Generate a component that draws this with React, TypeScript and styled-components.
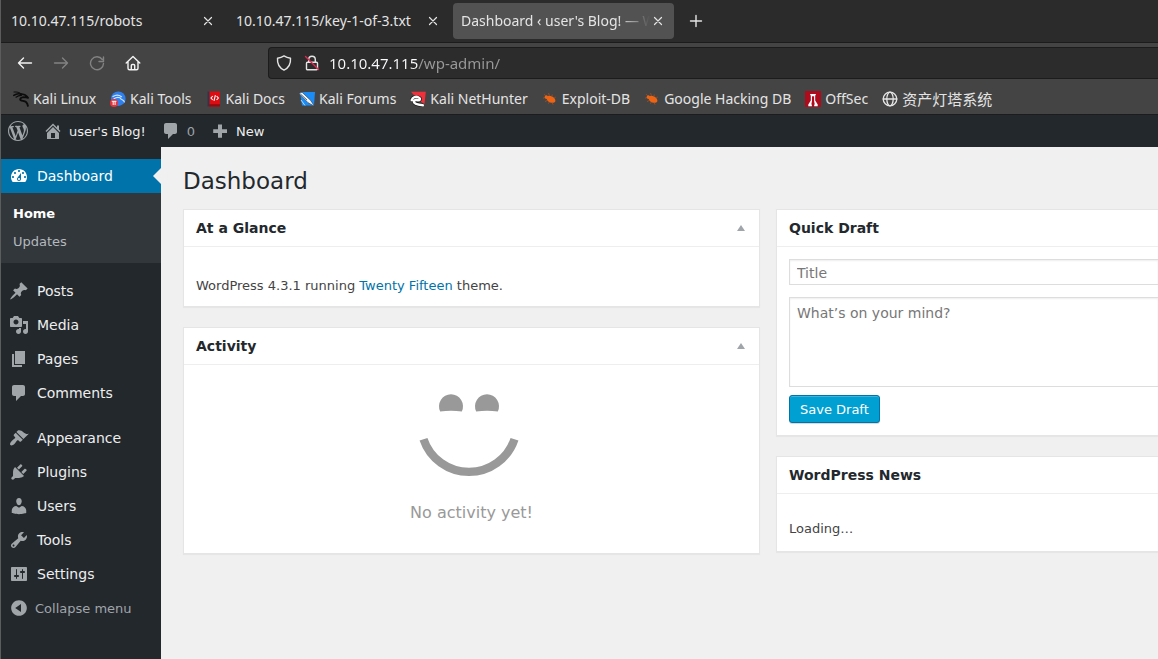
import React from "react";
import styled, { createGlobalStyle } from "styled-components";

const chromeFont = `"Noto Sans", "Noto Sans CJK SC", sans-serif`;
const pageFont = `"DejaVu Sans", sans-serif`;

const GlobalStyle = createGlobalStyle`
  *, *::before, *::after { box-sizing: border-box; }
  body { margin: 0; background: #f0f0f0; overflow-x: hidden; }
  button, input, textarea { font-family: inherit; margin: 0; }
  h1, h2, p, ul { margin: 0; padding: 0; }
  ul { list-style: none; }
  a { text-decoration: none; color: inherit; }
  svg { display: block; flex: none; }
`;

const Window = styled.div`
  display: flex;
  flex-direction: column;
  min-height: 100vh;
  border-left: 1px solid #5c5c5c;
`;

/* Browser chrome */

const Chrome = styled.header`
  background: #444444;
  border-bottom: 1px solid #1c1c1c;
  color: #e4e4e4;
  font-family: ${chromeFont};
  font-size: 14px;
  line-height: 20px;
`;

const TabStrip = styled.div`
  display: flex;
  gap: 4px;
  height: 43px;
  padding: 3px 2px;
  background: #2b2b2b;
  border-bottom: 1px solid #1c1c1c;
`;

const Tab = styled.div<{ $active?: boolean }>`
  display: flex;
  align-items: center;
  width: 221px;
  height: 36px;
  padding: 0 8px;
  border-radius: 4px;
  background: ${(p) => (p.$active ? "#525252" : "transparent")};
`;

const TabTitle = styled.span<{ $faded?: boolean }>`
  flex: 1;
  min-width: 0;
  white-space: nowrap;
  ${(p) =>
    p.$faded &&
    "mask-image: linear-gradient(to left, transparent, black 32px);"}
`;

const BareButton = styled.button`
  display: flex;
  align-items: center;
  justify-content: center;
  padding: 0;
  border: 0;
  background: none;
  color: inherit;
  cursor: pointer;
`;

const TabClose = styled(BareButton)`
  width: 16px;
  height: 16px;
`;

const NewTab = styled(BareButton)`
  width: 36px;
  height: 36px;
`;

const Toolbar = styled.div`
  display: flex;
  align-items: center;
  height: 40px;
  padding-left: 6px;
`;

const ToolButton = styled(BareButton)<{ $dim?: boolean }>`
  width: 36px;
  height: 32px;
  color: ${(p) => (p.$dim ? "#828282" : "#f2f2f2")};
`;

const AddressBar = styled.div`
  display: flex;
  align-items: center;
  flex: 1;
  height: 32px;
  margin-left: 117px;
  padding-left: 7px;
  gap: 9px;
  background: #2c2c2c;
  border: 1px solid #1c1c1c;
  border-right: 0;
  border-radius: 4px 0 0 4px;
`;

const SiteIcons = styled.div`
  display: flex;
  gap: 12px;
  color: #e4e4e4;
`;

const Address = styled.input`
  flex: 1;
  min-width: 0;
  padding: 0;
  border: 0;
  outline: 0;
  font-size: 15px;
  line-height: 24px;
  color: transparent;
  background: linear-gradient(to right, #fbfbfe 89px, #9a9a9a 89px);
  background-clip: text;
  -webkit-background-clip: text;
`;

const Bookmarks = styled.nav`
  display: flex;
  align-items: center;
  gap: 14px;
  height: 31px;
  padding: 0 0 0 12px;
`;

const Bookmark = styled.a<{ $large?: boolean }>`
  display: flex;
  align-items: center;
  gap: 4px;
  font-size: ${(p) => (p.$large ? 15 : 14)}px;
  white-space: nowrap;
`;

/* Admin bar */

const AdminBar = styled.nav`
  display: flex;
  align-items: center;
  height: 32px;
  padding-left: 7px;
  gap: 15px;
  background: #23282d;
  color: #eeeeee;
  font-family: ${pageFont};
  font-size: 13px;
  line-height: 20px;
`;

const BarItem = styled.a`
  display: flex;
  align-items: flex-end;
  gap: 6px;
  height: 22px;
  white-space: nowrap;
  svg { color: #a0a5aa; align-self: center; }
`;

const Muted = styled.span`
  color: #9ca1a6;
`;

/* Sidebar */

const Admin = styled.div`
  display: flex;
  flex: 1;
  font-family: ${pageFont};
`;

const Sidebar = styled.nav`
  flex: none;
  width: 160px;
  padding-top: 12px;
  background: #23282d;
  font-size: 14px;
  line-height: 18px;
`;

const MenuGroup = styled.ul`
  margin-bottom: 11px;
  &:last-child { margin-bottom: 0; }
`;

const MenuLink = styled.a<{ $current?: boolean }>`
  position: relative;
  display: flex;
  align-items: center;
  gap: 8px;
  height: 34px;
  padding-left: 8px;
  color: ${(p) => (p.$current ? "#ffffff" : "#eeeeee")};
  background: ${(p) => (p.$current ? "#0073aa" : "transparent")};
  svg { color: ${(p) => (p.$current ? "#ffffff" : "#a0a5aa")}; }
  &::after {
    content: "";
    display: ${(p) => (p.$current ? "block" : "none")};
    position: absolute;
    right: 0;
    top: 9px;
    border: 8px solid transparent;
    border-left-width: 0;
    border-right-color: #f0f0f0;
  }
`;

const Submenu = styled.ul`
  padding: 7px 0;
  background: #32373c;
`;

const SubLink = styled.a<{ $current?: boolean }>`
  display: block;
  padding: 5px 12px;
  font-size: 13px;
  color: ${(p) => (p.$current ? "#ffffff" : "#b4b9be")};
  font-weight: ${(p) => (p.$current ? 700 : 400)};
`;

const Collapse = styled(BareButton)`
  gap: 6px;
  height: 34px;
  padding-left: 8px;
  font-size: 13px;
  color: #a0a5aa;
`;

/* Dashboard */

const Content = styled.main`
  flex: 1;
  min-width: 0;
  padding: 20px 0 20px 22px;
  color: #444444;
  font-size: 13px;
  line-height: 20px;
`;

const PageTitle = styled.h1`
  font-size: 23px;
  font-weight: 400;
  line-height: 29px;
  color: #23282d;
`;

const Columns = styled.div`
  display: grid;
  grid-template-columns: minmax(0, 577fr) minmax(0, 382fr);
  gap: 16px;
  margin-top: 13px;
`;

const Column = styled.div`
  display: flex;
  flex-direction: column;
  gap: 20px;
`;

const Box = styled.section<{ $bleed?: boolean }>`
  background: #ffffff;
  border: 1px solid #e5e5e5;
  border-right-width: ${(p) => (p.$bleed ? 0 : 1)}px;
  box-shadow: 0 1px 1px rgba(0, 0, 0, 0.04);
`;

const BoxHeader = styled.header`
  display: flex;
  align-items: center;
  justify-content: space-between;
  height: 37px;
  padding: 0 12px 1px;
  border-bottom: 1px solid #eeeeee;
`;

const BoxTitle = styled.h2`
  font-size: 14px;
  font-weight: 700;
  line-height: 20px;
  color: #23282d;
`;

const Toggle = styled(BareButton)`
  width: 12px;
  height: 20px;
  color: #a0a5aa;
`;

const Paragraph = styled.p`
  padding: 29px 12px 10px;
`;

const Loading = styled.p`
  padding: 25px 12px 12px;
`;

const TextLink = styled.a`
  color: #0073aa;
`;

const NoActivity = styled.div`
  display: flex;
  flex-direction: column;
  align-items: center;
  gap: 20px;
  padding: 28px 0 30px;
  color: #999999;
  font-size: 16px;
  line-height: 20px;
`;

const DraftForm = styled.form`
  display: flex;
  flex-direction: column;
  align-items: flex-start;
  padding: 12px 0 12px 12px;
`;

const fieldStyle = `
  display: block;
  width: 100%;
  border: 1px solid #dddddd;
  border-right: 0;
  border-radius: 0;
  outline: 0;
  background: #ffffff;
  box-shadow: inset 0 1px 2px rgba(0, 0, 0, 0.07);
  font-size: 14px;
  color: #32373c;
  resize: none;
  &::placeholder { color: #777777; opacity: 1; }
`;

const TitleField = styled.input`
  ${fieldStyle}
  height: 26px;
  padding: 1px 7px 0;
`;

const DraftField = styled.textarea`
  ${fieldStyle}
  height: 90px;
  margin: 12px 0 8px;
  padding: 5px 7px;
  line-height: 20px;
`;

const SaveButton = styled.button`
  height: 28px;
  padding: 2px 10px 0;
  border: 1px solid #0073aa;
  border-radius: 3px;
  background: #00a0d2;
  box-shadow: inset 0 1px 0 rgba(120, 200, 230, 0.5), 0 1px 0 rgba(0, 0, 0, 0.15);
  color: #ffffff;
  font-size: 13px;
  line-height: 24px;
  cursor: pointer;
`;

/* Icons */

const dash = {
  wordpress:
    "M20 10c0-5.51-4.49-10-10-10C4.48 0 0 4.49 0 10c0 5.52 4.48 10 10 10 5.51 0 10-4.48 10-10zM7.78 15.37L4.37 6.22c.55-.02 1.17-.08 1.17-.08.5-.06.44-1.13-.06-1.11 0 0-1.45.11-2.37.11-.18 0-.37 0-.58-.01C4.12 2.69 6.87 1.11 10 1.11c2.33 0 4.45.87 6.05 2.34-.68-.11-1.65.39-1.65 1.58 0 .74.45 1.36.9 2.1.35.61.55 1.36.55 2.46 0 1.49-1.4 5-1.4 5l-3.03-8.37c.54-.02.82-.17.82-.17.5-.05.44-1.25-.06-1.22 0 0-1.44.12-2.38.12-.87 0-2.33-.12-2.33-.12-.5-.03-.56 1.2-.06 1.22l.92.08 1.26 3.41zM17.41 10c.24-.64.74-1.87.43-4.25.7 1.29 1.05 2.71 1.05 4.25 0 3.29-1.73 6.24-4.4 7.78.97-2.59 1.94-5.2 2.92-7.78zM6.1 18.09C3.12 16.65 1.11 13.53 1.11 10c0-1.3.23-2.48.72-3.59C3.25 10.3 4.67 14.2 6.1 18.09zm4.03-6.63l2.58 6.98c-.86.29-1.76.45-2.71.45-.79 0-1.57-.11-2.29-.33.81-2.38 1.62-4.74 2.42-7.1z",
  home: "M16 8.5l1.53 1.53-1.06 1.06L10 4.6l-6.47 6.49-1.06-1.06L10 2.5l4 4v-2h2v4zm-6-2.46l6 5.99V18H4v-5.97zM12 17v-5H8v5h4z",
  plus: "M17 8.2v3.800h-5v4.800H8v-4.800H3.200V8.200H8V3.400h4v4.800z",
  dashboard:
    "M3.76 16h12.48c1.1-1.37 1.76-3.11 1.76-5 0-4.42-3.58-8-8-8s-8 3.58-8 8c0 1.89.66 3.63 1.76 5zM10 4c.55 0 1 .45 1 1s-.45 1-1 1-1-.45-1-1 .45-1 1-1zM6 6c.55 0 1 .45 1 1s-.45 1-1 1-1-.45-1-1 .45-1 1-1zm8 0c.55 0 1 .45 1 1s-.45 1-1 1-1-.45-1-1 .45-1 1-1zm-5.37 5.55L12 7v6c0 1.1-.9 2-2 2s-2-.9-2-2c0-.57.24-1.08.63-1.45zM4 10c.55 0 1 .45 1 1s-.45 1-1 1-1-.45-1-1 .45-1 1-1zm12 0c.55 0 1 .45 1 1s-.45 1-1 1-1-.45-1-1 .45-1 1-1zm-5 3c0-.55-.45-1-1-1s-1 .45-1 1 .45 1 1 1 1-.45 1-1z",
  posts:
    "M10.44 3.02l1.82-1.82 6.36 6.35-1.83 1.82c-1.05-.68-2.48-.57-3.41.36l-.75.75c-.92.93-1.04 2.35-.35 3.41l-1.83 1.82-2.41-2.41-2.8 2.79c-.42.42-3.38 2.71-3.8 2.29s1.86-3.39 2.28-3.81l2.79-2.79L4.1 9.36l1.83-1.82c1.05.69 2.48.57 3.4-.36l.75-.75c.93-.92 1.05-2.35.36-3.41z",
  media:
    "M13 11V4c0-.55-.45-1-1-1h-1.67L9 1H5L3.67 3H2c-.55 0-1 .45-1 1v7c0 .55.45 1 1 1h10c.55 0 1-.45 1-1zM7 4.5c1.38 0 2.5 1.12 2.5 2.5S8.38 9.5 7 9.5 4.5 8.38 4.5 7 5.62 4.5 7 4.5zM14 6h5v10.5c0 1.38-1.12 2.5-2.5 2.5S14 17.88 14 16.5s1.12-2.5 2.5-2.5c.17 0 .34.02.5.05V9h-3V6zm-4 8.05V13h2v3.5c0 1.38-1.12 2.5-2.5 2.5S7 17.88 7 16.5 8.12 14 9.5 14c.17 0 .34.02.5.05z",
  pages: "M6 15V2h10v13H6zm-1 1h8v2H3V5h2v11z",
  comments:
    "M5 2h9c1.1 0 2 .9 2 2v7c0 1.1-.9 2-2 2h-2l-5 5v-5H5c-1.1 0-2-.9-2-2V4c0-1.1.9-2 2-2z",
  appearance:
    "M14.48 11.06L7.41 3.99l1.5-1.5c.5-.56 2.3-.47 3.51.32 1.21.8 1.43 1.28 2.91 2.1 1.18.64 2.45 1.26 4.45.85zm-.71.71L6.7 4.7 4.93 6.47c-.39.39-.39 1.02 0 1.41l1.06 1.06c.39.39.39 1.03 0 1.42-.6.6-1.43 1.11-2.21 1.69-.35.26-.7.53-1.01.84C1.43 14.23.4 16.08 1.4 17.07c.99 1 2.84-.03 4.18-1.36.31-.31.58-.66.85-1.02.57-.78 1.08-1.61 1.69-2.21.39-.39 1.02-.39 1.41 0l1.06 1.06c.39.39 1.02.39 1.41 0z",
  plugins:
    "M13.11 4.36L9.87 7.6 8 5.73l3.24-3.24c.35-.34 1.05-.2 1.56.32.52.51.66 1.21.31 1.55zm-8 1.77l.91-1.12 9.01 9.01-1.19.84c-.71.71-2.63 1.16-3.82 1.16H6.14L4.9 17.26c-.59.59-1.54.59-2.12 0-.59-.58-.59-1.53 0-2.12l1.24-1.24v-3.88c0-1.13.4-3.19 1.09-3.89zm7.26 3.97l3.24-3.24c.34-.35 1.04-.21 1.55.31.52.51.66 1.21.31 1.55l-3.24 3.25z",
  users:
    "M10 9.25c-2.27 0-2.73-3.44-2.73-3.44C7 4.02 7.82 2 9.97 2c2.16 0 2.98 2.02 2.71 3.81 0 0-.41 3.44-2.68 3.44zm0 2.57L12.72 10c2.39 0 4.52 2.33 4.52 4.53v2.49s-3.65 1.13-7.24 1.13c-3.65 0-7.24-1.13-7.24-1.13v-2.49c0-2.25 1.94-4.48 4.47-4.48z",
  tools:
    "M16.68 9.77c-1.34 1.34-3.3 1.67-4.95.99l-5.41 6.52c-.99.99-2.59.99-3.58 0s-.99-2.59 0-3.57l6.52-5.42c-.68-1.65-.35-3.61.99-4.95 1.28-1.28 3.12-1.62 4.72-1.06l-2.89 2.89 2.82 2.82 2.86-2.87c.53 1.58.18 3.39-1.08 4.65zM3.81 16.21c.4.39 1.04.39 1.43 0 .4-.4.4-1.04 0-1.43-.39-.4-1.03-.4-1.43 0-.39.39-.39 1.03 0 1.43z",
  settings:
    "M18 16V4c0-.55-.45-1-1-1H3c-.55 0-1 .45-1 1v12c0 .55.45 1 1 1h14c.55 0 1-.45 1-1zM8 11h1c.55 0 1 .45 1 1s-.45 1-1 1H8v1.5c0 .28-.22.5-.5.5s-.5-.22-.5-.5V13H6c-.55 0-1-.45-1-1s.45-1 1-1h1V5.5c0-.28.22-.5.5-.5s.5.22.5.5V11zm5-2h-1c-.55 0-1-.45-1-1s.45-1 1-1h1V5.5c0-.28.22-.5.5-.5s.5.22.5.5V7h1c.55 0 1 .45 1 1s-.45 1-1 1h-1v5.5c0 .28-.22.5-.5.5s-.5-.22-.5-.5V9z",
  collapse:
    "M10 2.16c4.33 0 7.84 3.51 7.84 7.84s-3.51 7.84-7.84 7.84S2.16 14.33 2.16 10 5.71 2.16 10 2.16zm2 11.72V6.12L6.18 9.97z",
};

type DashName = keyof typeof dash;

const Dashicon = ({ name }: { name: DashName }) => (
  <svg width="20" height="20" viewBox="0 0 20 20" fill="currentColor" fillRule="evenodd" aria-hidden="true">
    <path d={dash[name]} />
  </svg>
);

const Line = ({ children, size = 16, width = 1.4 }: { children: React.ReactNode; size?: number; width?: number }) => (
  <svg
    width={size}
    height={size}
    viewBox={`0 0 ${size} ${size}`}
    fill="none"
    stroke="currentColor"
    strokeWidth={width}
    strokeLinecap="round"
    strokeLinejoin="round"
    aria-hidden="true"
  >
    {children}
  </svg>
);

const CloseIcon = () => (
  <Line width={1.2}>
    <path d="M4.5 4.5l7 7M11.5 4.5l-7 7" />
  </Line>
);

const Picture = ({ children }: { children: React.ReactNode }) => (
  <svg width="16" height="16" viewBox="0 0 16 16" aria-hidden="true">
    {children}
  </svg>
);

const KaliDragon = () => (
  <Picture>
    <g fill="none" stroke="#0c0c0c" strokeLinecap="round" strokeLinejoin="round">
      <path d="M1 1C4 .8 6.500 1.200 8.400 3" strokeWidth="1" />
      <path d="M.8 4.400C3.600 2.400 6 2.200 8.600 3.400" strokeWidth="1.600" />
      <path d="M3 6.200C5 4.600 6 4.400 8.400 4.400" strokeWidth="1.100" />
      <path d="M8 3.200c2.200-.2 4.400.4 5.800 2.200l1.200 1.400-2-.4C10.500 6 7.400 6 7.200 8.200c0 2.100 4 1.200 5.800 2.700 1.200 1 1.700 2.200 1.900 4" strokeWidth="1.900" />
    </g>
  </Picture>
);

const KaliTools = () => (
  <Picture>
    <circle cx="8.300" cy="7.700" r="7.300" fill="#2f80ed" />
    <path d="M3 5.500c3-2 6-1.700 8.500.2M4 7.700c2.500-1.800 4.500-1.600 6-1 1 2.600 3.600 1.500 4.300 4.200" fill="none" stroke="#cfe4ff" strokeWidth="1.200" strokeLinecap="round" />
    <circle cx="4" cy="11.900" r="4" fill="#e5343d" />
    <path d="M1.800 10.300h4.600M3.200 10.300v3.700M5.100 10.300v3.700" fill="none" stroke="#fff" strokeWidth="1" />
  </Picture>
);

const KaliDocs = () => (
  <Picture>
    <path d="M2 .5h12V15.500H2z" fill="#dc0d12" />
    <path d="M1.600 .5h1.800V15.500H1.600z" fill="#27374d" />
    <path d="M3.200 13.200h10.800v2.300H3.200z" fill="#8e0b10" />
    <path d="M6.800 5L5 7l1.800 2M10.600 5l1.800 2-1.800 2M9.400 4.200L8 9.800" fill="none" stroke="#fff" strokeWidth="1.100" />
  </Picture>
);

const KaliForums = () => (
  <Picture>
    <path d="M1 1h15l-1 13.500H3z" fill="#1b8cf5" />
    <path d="M0 2.500l3-1.300 8.500 8 4 6-6.500-3.500z" fill="#f4f4f4" stroke="#23364a" strokeWidth=".6" />
    <path d="M1.500 3l6.500 6" stroke="#23364a" strokeWidth=".7" />
    <path d="M2 9l4 5.500" stroke="#dbeeff" strokeWidth=".8" />
  </Picture>
);

const NetHunter = () => (
  <Picture>
    <path d="M1 .8h14.800L14.500 13 8 9z" fill="#f0303a" />
    <path d="M1.600 9C2.500 6 6 5.400 8.800 6.600c2.400 1.200 1.200 3.300-1 2.900-2.200-.4-3.800-.2-3.800 1.200 0 1.600 3 3.100 9 3.600" fill="none" stroke="#151515" strokeWidth="3.600" />
    <path d="M1.800 9C2.500 6 6 5.200 8.600 6.500c2.400 1.300 1.200 3.100-.8 2.800-2.200-.4-4-.2-4 1.300 0 1.700 3 3.200 9 3.600" fill="none" stroke="#fff" strokeWidth="2.500" strokeLinecap="round" />
  </Picture>
);

const Bug = () => (
  <Picture>
    <g transform="translate(.4 1) rotate(24 8 8) scale(.88)">
      <path d="M4.200 7.800c.3-2.400 2.500-3.300 5-3.200 3 .1 5.600 1.700 5.600 3.700s-2.600 3.400-5.600 3.400-4.800-1.500-5-3.900z" fill="#ec6414" />
      <circle cx="3.600" cy="8" r="2" fill="#ec6414" />
      <path d="M6 5L4 2.700M9 5l-.5-2.500M12 5.600l1.300-2M6 11l-1.800 2.300M9 11.500l-.3 2.300M12 11l2 1.700M2.300 7L0 6M2.300 9L.7 10.500" fill="none" stroke="#b4531c" strokeWidth=".7" />
    </g>
  </Picture>
);

const OffSec = () => (
  <Picture>
    <path d="M0 0h16v16H0z" fill="#b00b1c" />
    <path d="M5.200 3h5.600v1.200h-.6v5.300l2.500 4v1.700H9.200v-1.700h.6l-.7-3.500V5.300H7v4.700l-.7 3.500h.6v1.700H3.300v-1.700l2.500-4V4.200h-.6z" fill="#ffffff" />
  </Picture>
);

const Globe = () => (
  <Line width={1.3}>
    <circle cx="8" cy="8" r="6.800" />
    <ellipse cx="8" cy="8" rx="3.200" ry="6.800" />
    <path d="M1.200 8h13.600" />
  </Line>
);

const Smiley = () => (
  <svg width="120" height="90" viewBox="0 0 120 90" aria-hidden="true">
    <g fill="#999999">
      <path d="M28.200 18.600A12 12 0 1 1 49.800 18.600Q39 16.800 28.200 18.600z" />
      <path d="M64.200 18.600A12 12 0 1 1 85.800 18.600Q75 16.800 64.200 18.600z" />
    </g>
    <path d="M11.500 46.200A48 48 0 0 0 102.500 46.200" fill="none" stroke="#999999" strokeWidth="8.300" />
  </svg>
);

const ToggleArrow = () => (
  <svg width="8" height="6" viewBox="0 0 8 6" fill="currentColor" aria-hidden="true">
    <path d="M4 0l4 6H0z" />
  </svg>
);

/* Data */

const bookmarks = [
  { label: "Kali Linux", icon: <KaliDragon /> },
  { label: "Kali Tools", icon: <KaliTools /> },
  { label: "Kali Docs", icon: <KaliDocs /> },
  { label: "Kali Forums", icon: <KaliForums /> },
  { label: "Kali NetHunter", icon: <NetHunter /> },
  { label: "Exploit-DB", icon: <Bug /> },
  { label: "Google Hacking DB", icon: <Bug /> },
  { label: "OffSec", icon: <OffSec /> },
  { label: "资产灯塔系统", icon: <Globe />, large: true },
];

const contentMenu: [string, DashName][] = [
  ["Posts", "posts"],
  ["Media", "media"],
  ["Pages", "pages"],
  ["Comments", "comments"],
];

const siteMenu: [string, DashName][] = [
  ["Appearance", "appearance"],
  ["Plugins", "plugins"],
  ["Users", "users"],
  ["Tools", "tools"],
  ["Settings", "settings"],
];

const MenuItems = ({ items }: { items: [string, DashName][] }) => (
  <>
    {items.map(([label, icon]) => (
      <li key={label}>
        <MenuLink href="#">
          <Dashicon name={icon} />
          {label}
        </MenuLink>
      </li>
    ))}
  </>
);

const PostBox = ({
  title,
  bleed,
  children,
}: {
  title: string;
  bleed?: boolean;
  children: React.ReactNode;
}) => (
  <Box $bleed={bleed}>
    <BoxHeader>
      <BoxTitle>{title}</BoxTitle>
      {!bleed && (
        <Toggle type="button" aria-label={`Toggle panel: ${title}`}>
          <ToggleArrow />
        </Toggle>
      )}
    </BoxHeader>
    {children}
  </Box>
);

export default function App() {
  return (
    <Window>
      <GlobalStyle />
      <Chrome>
        <TabStrip>
          <Tab>
            <TabTitle>10.10.47.115/robots</TabTitle>
            <TabClose aria-label="Close tab"><CloseIcon /></TabClose>
          </Tab>
          <Tab>
            <TabTitle>10.10.47.115/key-1-of-3.txt</TabTitle>
            <TabClose aria-label="Close tab"><CloseIcon /></TabClose>
          </Tab>
          <Tab $active>
            <TabTitle $faded>Dashboard ‹ user's Blog! — W</TabTitle>
            <TabClose aria-label="Close tab"><CloseIcon /></TabClose>
          </Tab>
          <NewTab aria-label="New tab">
            <Line><path d="M8 2.500v11M2.500 8h11" /></Line>
          </NewTab>
        </TabStrip>
        <Toolbar>
          <ToolButton aria-label="Back">
            <Line><path d="M1.500 8h13M6.500 3L1.500 8l5 5" /></Line>
          </ToolButton>
          <ToolButton $dim aria-label="Forward">
            <Line><path d="M1.500 8h13M9.500 3l5 5-5 5" /></Line>
          </ToolButton>
          <ToolButton $dim aria-label="Reload">
            <Line><path d="M13.300 4.500A6.500 6.500 0 1 0 14.500 8.500M14.500 2v4.500H10" /></Line>
          </ToolButton>
          <ToolButton aria-label="Home">
            <Line>
              <path d="M1.200 8L8 1.500 14.800 8M3 6.800v6.500a1.500 1.500 0 0 0 1.500 1.500h7a1.500 1.500 0 0 0 1.500-1.500V6.800M6.300 14.500v-4a1 1 0 0 1 1-1h1.400a1 1 0 0 1 1 1v4" />
            </Line>
          </ToolButton>
          <AddressBar>
            <SiteIcons>
              <Line>
                <path d="M8 .9c2.400 1.500 4.400 2 6.500 2.300.4 5.300-1.700 9.500-6.500 11.900C3.200 12.700 1.100 8.500 1.500 3.200 3.600 2.900 5.600 2.400 8 .9z" />
              </Line>
              <Line>
                <path d="M4.700 7V4.600a3.300 3.300 0 0 1 6.600 0V7M3.500 7.200h9a1 1 0 0 1 1 1v5.600a1 1 0 0 1-1 1h-9a1 1 0 0 1-1-1V8.200a1 1 0 0 1 1-1z" />
                <path d="M1.500 1.500l13 13" stroke="#e22850" />
              </Line>
            </SiteIcons>
            <Address aria-label="Address" type="text" defaultValue="10.10.47.115/wp-admin/" />
          </AddressBar>
        </Toolbar>
        <Bookmarks aria-label="Bookmarks">
          {bookmarks.map((b) => (
            <Bookmark key={b.label} href="#" $large={b.large}>
              {b.icon}
              {b.label}
            </Bookmark>
          ))}
        </Bookmarks>
      </Chrome>

      <AdminBar aria-label="Toolbar">
        <BarItem href="#" aria-label="About WordPress"><Dashicon name="wordpress" /></BarItem>
        <BarItem href="#"><Dashicon name="home" />user's Blog!</BarItem>
        <BarItem href="#"><Dashicon name="comments" /><Muted>0</Muted></BarItem>
        <BarItem href="#"><Dashicon name="plus" />New</BarItem>
      </AdminBar>

      <Admin>
        <Sidebar aria-label="Main menu">
          <MenuGroup>
            <li>
              <MenuLink href="#" $current>
                <Dashicon name="dashboard" />
                Dashboard
              </MenuLink>
              <Submenu>
                <li><SubLink href="#" $current>Home</SubLink></li>
                <li><SubLink href="#">Updates</SubLink></li>
              </Submenu>
            </li>
          </MenuGroup>
          <MenuGroup>
            <MenuItems items={contentMenu} />
          </MenuGroup>
          <MenuGroup>
            <MenuItems items={siteMenu} />
            <li>
              <Collapse type="button">
                <Dashicon name="collapse" />
                Collapse menu
              </Collapse>
            </li>
          </MenuGroup>
        </Sidebar>

        <Content>
          <PageTitle>Dashboard</PageTitle>
          <Columns>
            <Column>
              <PostBox title="At a Glance">
                <Paragraph>
                  WordPress 4.3.1 running <TextLink href="#">Twenty Fifteen</TextLink> theme.
                </Paragraph>
              </PostBox>
              <PostBox title="Activity">
                <NoActivity>
                  <Smiley />
                  <p>No activity yet!</p>
                </NoActivity>
              </PostBox>
            </Column>
            <Column>
              <PostBox title="Quick Draft" bleed>
                <DraftForm onSubmit={(e) => e.preventDefault()}>
                  <TitleField type="text" aria-label="Title" placeholder="Title" />
                  <DraftField aria-label="Content" placeholder="What’s on your mind?" />
                  <SaveButton type="submit">Save Draft</SaveButton>
                </DraftForm>
              </PostBox>
              <PostBox title="WordPress News" bleed>
                <Loading>Loading…</Loading>
              </PostBox>
            </Column>
          </Columns>
        </Content>
      </Admin>
    </Window>
  );
}
